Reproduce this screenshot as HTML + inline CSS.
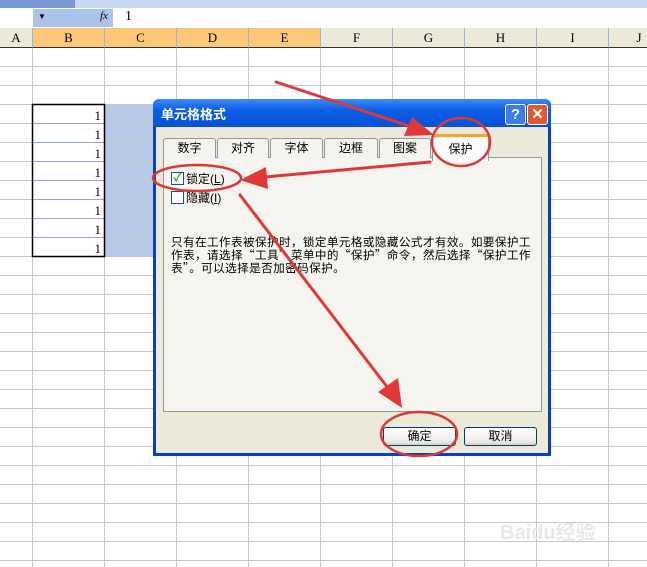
<!DOCTYPE html><html><head><meta charset="utf-8"><style>
body{margin:0;width:647px;height:567px;overflow:hidden;background:#fff;font-family:"Liberation Sans","Noto Sans CJK SC",sans-serif;position:relative}
.a{position:absolute}
.hd{position:absolute;top:28px;height:19px;border-right:1px solid #9eb6ce;border-bottom:1px solid #333;font:13px "Liberation Serif",serif;text-align:center;line-height:19px;color:#000}
.tab{position:absolute;top:138px;height:19px;border:1px solid #919b9c;border-bottom:none;background:#f4f3ee;font-size:12px;text-align:center;line-height:19px;border-radius:3px 3px 0 0}
.btn{position:absolute;height:17px;border:1px solid #003c74;border-radius:3px;background:linear-gradient(#fff,#ecebe6 80%,#d6d0c5);font-size:12px;text-align:center;line-height:17px}
</style></head><body>
<div class="a" style="left:0;top:0;width:647px;height:8px;background:#c5d7f1"></div>
<div class="a" style="left:0;top:0;width:75px;height:8px;background:#7899d4"></div>
<div class="a" style="left:0;top:8px;width:647px;height:20px;background:#fff;border-bottom:1px solid #a0a0a0"></div>
<div class="a" style="left:33px;top:9px;width:80px;height:18px;background:#a9c3ea"></div>
<div class="a" style="left:38px;top:12px;font-size:8px">▼</div>
<div class="a" style="left:100px;top:10px;font:italic 11px 'Liberation Serif',serif">fx</div>
<div class="a" style="left:125px;top:9px;font:14px 'Liberation Serif',serif">1</div>
<div class="a" style="left:0;top:28px;width:647px;height:19px;background:#ece9d8"></div>
<div class="hd" style="left:0;width:32px">A</div>
<div class="hd" style="left:33px;width:71px;background:#fbc87a">B</div>
<div class="hd" style="left:105px;width:71px;background:#fbc87a">C</div>
<div class="hd" style="left:177px;width:71px;background:#fbc87a">D</div>
<div class="hd" style="left:249px;width:71px;background:#fbc87a">E</div>
<div class="hd" style="left:321px;width:71px">F</div>
<div class="hd" style="left:393px;width:71px">G</div>
<div class="hd" style="left:465px;width:71px">H</div>
<div class="hd" style="left:537px;width:71px">I</div>
<div class="hd" style="left:609px;width:60px">J</div>
<svg class="a" style="left:0;top:48px" width="647" height="519">
<rect x="105" y="56" width="72" height="152" fill="#b7cbe9"/>
<g stroke="#c8c8c8" stroke-width="1">
<path d="M0 18.5H647M0 37.5H647M0 56.5H647M0 75.5H647M0 94.5H647M0 113.5H647M0 132.5H647M0 151.5H647M0 170.5H647M0 189.5H647M0 208.5H647M0 227.5H647M0 246.5H647M0 265.5H647M0 284.5H647M0 303.5H647M0 322.5H647M0 341.5H647M0 360.5H647M0 379.5H647M0 398.5H647M0 417.5H647M0 436.5H647M0 455.5H647M0 474.5H647M0 493.5H647M0 512.5H647"/>
<path d="M32.5 0V519M104.5 0V519M176.5 0V519M248.5 0V519M320.5 0V519M392.5 0V519M464.5 0V519M536.5 0V519M608.5 0V519"/>
</g>
<g stroke="#8fa9d6"><path d="M33 75.5H104M33 94.5H104M33 113.5H104M33 132.5H104M33 151.5H104M33 170.5H104M33 189.5H104"/></g>
<rect x="32.5" y="56.5" width="72" height="152" fill="none" stroke="#000" stroke-width="1.5"/>
<g fill="#000" font-family="Liberation Serif" font-size="13" text-anchor="end">
<text x="101" y="72">1</text><text x="101" y="91">1</text><text x="101" y="110">1</text><text x="101" y="129">1</text><text x="101" y="148">1</text><text x="101" y="167">1</text><text x="101" y="186">1</text><text x="101" y="205">1</text></g>
</svg>
<div class="a" style="left:153px;top:99px;width:398px;height:357px;background:#0a3fc0;border-radius:6px 6px 0 0"></div>
<div class="a" style="left:153px;top:99px;width:398px;height:28px;background:linear-gradient(#3d8bf7,#0b5ee3 40%,#0851d8);border-radius:6px 6px 0 0"></div>
<div class="a" style="left:161px;top:104px;color:#fff;font-size:13px;font-weight:bold">单元格格式</div>
<div class="a" style="left:505px;top:104px;width:19px;height:19px;border:1px solid #fff;border-radius:3px;background:#3c7bea;color:#fff;font-weight:bold;text-align:center;line-height:19px;font-size:15px">?</div>
<div class="a" style="left:527px;top:104px;width:19px;height:19px;border:1px solid #fff;border-radius:3px;background:#e0592f;color:#fff;font-weight:bold;text-align:center;line-height:19px;font-size:15px">✕</div>
<div class="a" style="left:156px;top:127px;width:392px;height:326px;background:#ece9d8"></div>
<div class="a" style="left:163px;top:157px;width:377px;height:253px;background:#f5f4ef;border:1px solid #919b9c"></div>
<div class="tab" style="left:163px;width:51px">数字</div>
<div class="tab" style="left:217px;width:50px">对齐</div>
<div class="tab" style="left:270px;width:51px">字体</div>
<div class="tab" style="left:324px;width:52px">边框</div>
<div class="tab" style="left:379px;width:50px">图案</div>
<div class="tab" style="left:432px;top:134px;height:24px;width:55px;background:#fcfcfe;border-top:3px solid #f5a623;line-height:24px">保护</div>
<div class="a" style="left:171px;top:172px;width:11px;height:11px;border:1px solid #1c5180;background:#fff;color:#21a121;font-size:11px;line-height:11px;text-align:center;font-weight:bold">✓</div>
<div class="a" style="left:186px;top:170px;font-size:12px">锁定(<u>L</u>)</div>
<div class="a" style="left:171px;top:191px;width:11px;height:11px;border:1px solid #1c5180;background:#fff"></div>
<div class="a" style="left:186px;top:189px;font-size:12px">隐藏(<u>I</u>)</div>
<div class="a" style="left:171px;top:236px;white-space:nowrap;font-family:'Noto Sans CJK SC',sans-serif;font-size:11.6px;letter-spacing:0.4px;line-height:13px">只有在工作表被保护时，锁定单元格或隐藏公式才有效。如要保护工<br>作表，请选择“工具”菜单中的“保护”命令，然后选择“保护工作<br>表”。可以选择是否加密码保护。</div>
<div class="btn" style="left:383px;top:427px;width:71px">确定</div>
<div class="btn" style="left:464px;top:427px;width:71px">取消</div>
<svg class="a" style="left:0;top:0" width="647" height="567">
<g fill="none" stroke="#d83a3a" stroke-width="2.5">
<ellipse cx="461" cy="142" rx="29" ry="24"/>
<ellipse cx="197" cy="178" rx="44" ry="13"/>
<ellipse cx="419" cy="434" rx="38" ry="22"/>
</g>
<g stroke="#e03838" stroke-width="3" stroke-linecap="round">
<line x1="276" y1="82" x2="415" y2="128"/>
<line x1="430" y1="162" x2="265" y2="177"/>
<line x1="240" y1="195" x2="388" y2="388"/>
</g>
<g fill="#e03838">
<polygon points="434,135 412,117 404,136"/>
<polygon points="240,180 266,167 268,189"/>
<polygon points="402,408 378,392 398,378"/>
</g>
</svg>
<div class="a" style="left:500px;top:516px;color:#e8e8e8;font-size:20px;font-weight:bold">Baidu经验</div>
</body></html>
